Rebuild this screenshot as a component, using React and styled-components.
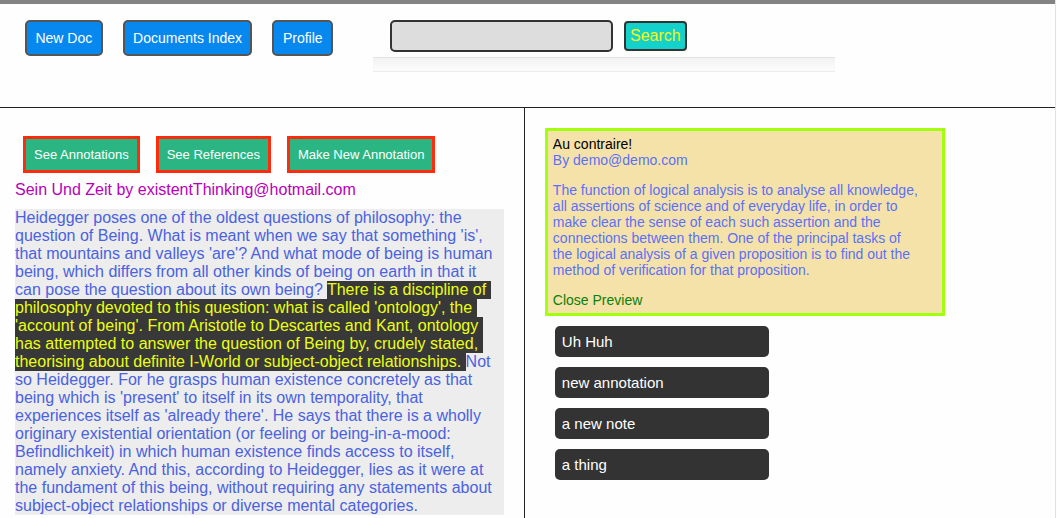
import React from "react";
import styled, { createGlobalStyle } from "styled-components";

const GlobalStyle = createGlobalStyle`
  *, *::before, *::after { box-sizing: border-box; }
  body {
    margin: 0;
    background: #fefefe;
    color: #000;
    font-family: "Liberation Sans", Arial, sans-serif;
    font-size: 16px;
    line-height: 18px;
  }
`;

const Page = styled.div`
  min-height: 100vh;
  display: flex;
  flex-direction: column;
  border-right: 1px solid #e2e2e2;
  margin-right: 1px;
`;

const Header = styled.header`
  display: flex;
  align-items: flex-start;
  gap: 40px;
  padding: 16px 24px 35px 25px;
  border-top: 4px solid #838383;
  border-bottom: 1px solid #222;
`;

const Nav = styled.nav`
  flex: 0 0 308px;
  display: flex;
  gap: 20px;
`;

const NavLink = styled.a`
  flex: 1 1 auto;
  padding: 7px 8px;
  border: 2px solid #555;
  border-radius: 5px;
  background: #0788ef;
  color: #fff;
  font-size: 14px;
  text-align: center;
  text-decoration: none;
  white-space: nowrap;
`;

const SearchArea = styled.div`
  flex: 0 1 462px;
`;

const SearchForm = styled.form`
  display: flex;
  align-items: center;
  gap: 11px;
  padding: 0 17px 5px;
`;

const SearchInput = styled.input`
  flex: 0 1 223px;
  min-width: 0;
  height: 32px;
  padding: 0 8px;
  border: 2px solid #333;
  border-radius: 5px;
  background: #ddd;
  font: inherit;
`;

const SearchButton = styled.button`
  height: 30px;
  padding: 0 4px;
  border: 2px solid #333;
  border-radius: 4px;
  background: #14d1cc;
  color: #f8f80a;
  font: inherit;
`;

const ResultsBar = styled.div`
  height: 15px;
  border-top: 1px solid #e2e2e2;
  border-bottom: 1px solid #ececec;
  background: linear-gradient(#f2f2f2, #fcfcfc);
`;

const Columns = styled.main`
  flex: 1;
  display: grid;
  grid-template-columns: 99fr 100fr;
`;

const DocumentPane = styled.section`
  padding: 28px 20px 3px 15px;
  border-right: 1px solid #222;
`;

const Toolbar = styled.div`
  display: flex;
  gap: 16px;
  padding: 0 8px;
`;

const ToolButton = styled.button`
  height: 37px;
  padding: 0 8px;
  border: 3px solid #ff2b0c;
  background: #2bb582;
  color: #fff;
  font: inherit;
  font-size: 13px;
  white-space: nowrap;
`;

const DocumentTitle = styled.h1`
  margin: 8px 0 10px;
  color: #b800b8;
  font-size: 16px;
  font-weight: 400;
`;

const DocumentBody = styled.p`
  margin: 0;
  background: #ededed;
  color: #4a62e0;
  white-space: pre-wrap;
`;

const Highlight = styled.mark`
  padding-bottom: 1px;
  background: #383838;
  color: #ebff14;
`;

const AnnotationPane = styled.section`
  padding: 20px;
`;

const Preview = styled.article`
  max-width: 400px;
  padding: 5px 20px 5px 5px;
  border: 3px solid #a2ff0d;
  background: #f5e2a8;
  color: #5b70fa;
  font-size: 14px;
  line-height: 16px;
`;

const PreviewTitle = styled.h2`
  margin: 0;
  color: #000;
  font-size: 14px;
  font-weight: 400;
`;

const PreviewText = styled.p`
  margin: ${(p) => (p.$spaced ? "14px 0" : "0")};
`;

const CloseButton = styled.button`
  display: block;
  padding: 0;
  border: 0;
  background: none;
  color: #0a800a;
  font: inherit;
`;

const AnnotationList = styled.ul`
  display: flex;
  flex-direction: column;
  gap: 10px;
  max-width: 234px;
  margin: 10px 0 0;
  padding: 0 10px;
  list-style: none;
`;

const AnnotationButton = styled.button`
  display: block;
  width: 100%;
  height: 31px;
  padding: 0 7px;
  border: 0;
  border-radius: 5px;
  background: #333;
  color: #fff;
  font: inherit;
  font-size: 15px;
  text-align: left;
`;

const navItems = ["New Doc", "Documents Index", "Profile"];
const tools = ["See Annotations", "See References", "Make New Annotation"];
const annotations = ["Uh Huh", "new annotation", "a new note", "a thing"];

export default function App() {
  return (
    <Page>
      <GlobalStyle />
      <Header>
        <Nav>
          {navItems.map((item) => (
            <NavLink key={item} href="#">{item}</NavLink>
          ))}
        </Nav>
        <SearchArea>
          <SearchForm onSubmit={(e) => e.preventDefault()}>
            <SearchInput type="text" aria-label="Search" />
            <SearchButton type="submit">Search</SearchButton>
          </SearchForm>
          <ResultsBar />
        </SearchArea>
      </Header>
      <Columns>
        <DocumentPane>
          <Toolbar>
            {tools.map((tool) => (
              <ToolButton key={tool} type="button">{tool}</ToolButton>
            ))}
          </Toolbar>
          <DocumentTitle>Sein Und Zeit by existentThinking@hotmail.com</DocumentTitle>
          <DocumentBody>
            {"Heidegger poses one of the oldest questions of philosophy: the question of Being. What is meant when we say that something 'is', that mountains and valleys 'are'? And what mode of being is human being, which differs from all other kinds of being on earth in that it can pose the question about its own being? "}
            <Highlight>
              {"There is a discipline of philosophy devoted to this question: what is called 'ontology', the 'account of being'. From Aristotle to Descartes and Kant, ontology has attempted to answer the question of Being by, crudely stated, theorising about definite I-World or subject-object relationships. "}
            </Highlight>
            {"Not so Heidegger. For he grasps human existence concretely as that being which is 'present' to itself in its own temporality, that experiences itself as 'already there'. He says that there is a wholly originary existential orientation (or feeling or being-in-a-mood: Befindlichkeit) in which human existence finds access to itself, namely anxiety. And this, according to Heidegger, lies as it were at the fundament of this being, without requiring any statements about subject-object relationships or diverse mental categories."}
          </DocumentBody>
        </DocumentPane>
        <AnnotationPane>
          <Preview>
            <PreviewTitle>Au contraire!</PreviewTitle>
            <PreviewText>By demo@demo.com</PreviewText>
            <PreviewText $spaced>
              The function of logical analysis is to analyse all knowledge, all assertions of science and of
              everyday life, in order to make clear the sense of each such assertion and the connections
              between them. One of the principal tasks of the logical analysis of a given proposition is to
              find out the method of verification for that proposition.
            </PreviewText>
            <CloseButton type="button">Close Preview</CloseButton>
          </Preview>
          <AnnotationList>
            {annotations.map((name) => (
              <li key={name}>
                <AnnotationButton type="button">{name}</AnnotationButton>
              </li>
            ))}
          </AnnotationList>
        </AnnotationPane>
      </Columns>
    </Page>
  );
}
